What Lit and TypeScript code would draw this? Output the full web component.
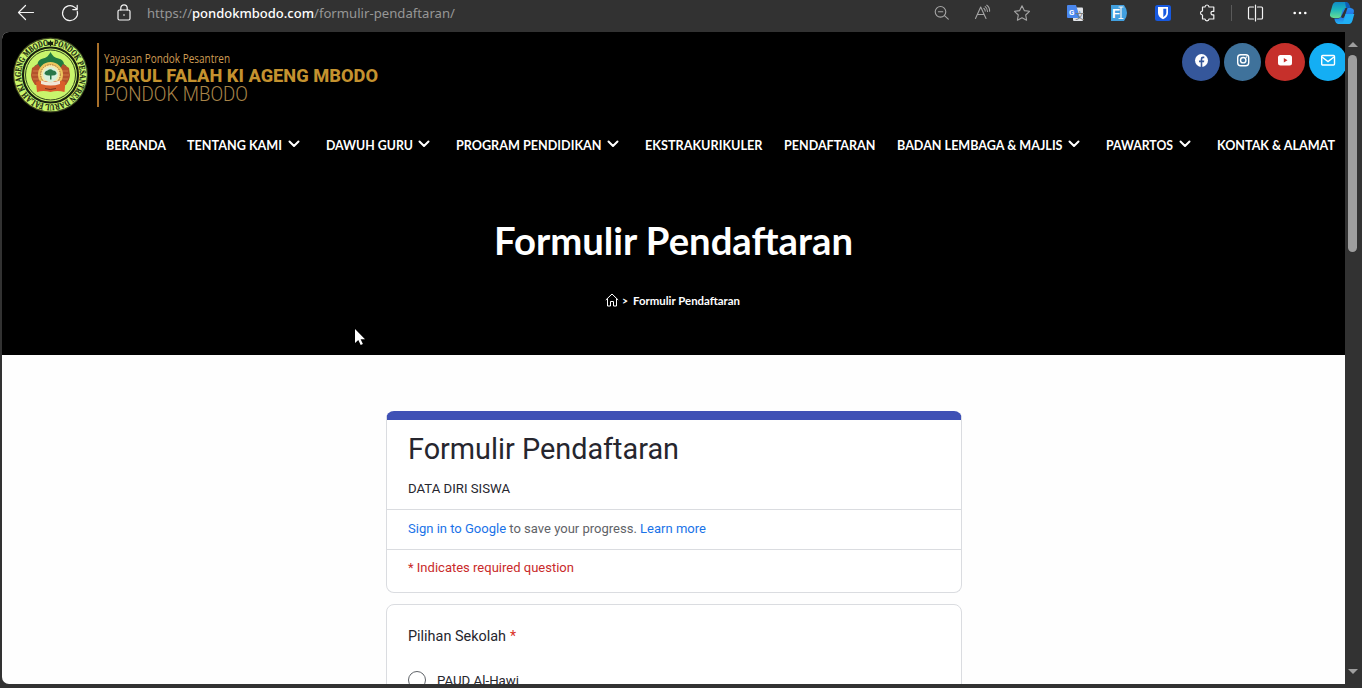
import { LitElement, html, svg, css, nothing } from "lit";
import { customElement, property } from "lit/decorators.js";

@customElement("fit-text")
class FitText extends LitElement {
  @property({ type: Number }) w = 100;
  @property({ type: Number }) h = 20;
  @property({ type: Number }) base = 15;
  @property() text = "";
  static styles = css`
    :host { display: block; flex: none; }
    svg { display: block; overflow: visible; fill: currentColor; }
  `;
  render() {
    return html`<svg width=${this.w} height=${this.h}>
      <text x="0" y=${this.base} textLength=${this.w} lengthAdjust="spacingAndGlyphs">${this.text}</text>
    </svg>`;
  }
}

@customElement("browser-bar")
class BrowserBar extends LitElement {
  static styles = css`
    :host { display: flex; height: 32px; background: #323232; flex: none; }
    svg { display: block; flex: none; fill: none; stroke: #f4f4f4; stroke-width: 1.2; stroke-linecap: round; stroke-linejoin: round; }
    .left { display: flex; align-items: center; height: 26px; padding-left: 16px; gap: 24px; flex: 1; }
    .left svg { width: 20px; height: 20px; }
    .left .lock { margin-left: 10px; }
    .url { display: flex; margin-left: -11px; font: 13.3px "Noto Sans", sans-serif; color: #979797; }
    .host { color: #fff; font-weight: 500; }
    .right { display: flex; align-items: center; height: 26px; }
    .right .dim { stroke: #a5a5a5; stroke-width: 1.1; }
    .sep { width: 1px; height: 16px; background: #5a5a5a; margin: 0 15px; }
    .g { font: bold 8px Roboto, sans-serif; fill: #fff; stroke: none; }
    .f { font: bold 13px "Liberation Sans", sans-serif; fill: #fff; stroke: none; }
    .zh { font: 9px "Noto Sans CJK SC", sans-serif; fill: #777; stroke: none; }
  `;
  render() {
    return html`
      <div class="left">
        <svg viewBox="0 0 20 20"><path d="M17.500 9.500H2.500M9.500 2.500L2.500 9.500l7 7" /></svg>
        <svg viewBox="0 0 20 20"><path d="M17.3 8.3A7.5 7.5 0 1 1 14.8 4.4L17 6.3M17.2 2.4v4.2h-4.4" /></svg>
        <svg class="lock" viewBox="0 0 20 20"><rect x="4" y="7" width="12" height="10" rx="1.5" /><path d="M6.8 7V5a3.2 3.2 0 0 1 6.4 0v2" /><circle cx="10" cy="12" r=".8" fill="#fff" stroke="none" /></svg>
        <div class="url">
          <fit-text w="45" h="20" base="15" text="https://"></fit-text>
          <fit-text class="host" w="122" h="20" base="15" text="pondokmbodo.com"></fit-text>
          <fit-text w="141" h="20" base="15" text="/formulir-pendaftaran/"></fit-text>
        </div>
      </div>
      <div class="right">
        <svg class="dim" width="18" height="20" viewBox="933 3 18 20"><circle cx="940.5" cy="11.8" r="5.3" /><path d="M938.4 11.8h4.4M944.5 15.6l3.8 3.6" /></svg>
        <svg class="dim" width="40" height="20" viewBox="951 3 40 20"><path d="M975.5 18.5L980.7 7L986 18.5M977.4 14.5h6.7M983.8 8.3q1.4 1 1.4 2.8M985.2 6.6q2.3 1.6 2.3 4.8M986.8 5.2q3 2 2.8 6" /></svg>
        <svg class="dim" width="76" height="20" viewBox="991 3 76 20"><path d="M1022 5.8l2.3 4.8 5.2.7-3.8 3.7.9 5.2-4.6-2.5-4.6 2.5.9-5.2-3.8-3.7 5.2-.7z" /></svg>
        <svg width="44" height="20" viewBox="1067 3 44 20">
          <rect x="1073" y="7.5" width="10" height="13.5" rx="1" fill="#e1e3e8" stroke="none" />
          <path d="M1068 5h8l4 13h-12a1 1 0 0 1-1-1V6a1 1 0 0 1 1-1z" fill="#4a87ee" stroke="none" />
          <text class="g" x="1069" y="14.5">G</text><text class="zh" x="1075.3" y="19">文</text>
        </svg>
        <svg width="44" height="20" viewBox="1111 3 44 20">
          <path d="M1111 5h13q3 4 3 8t-3 8h-13z" fill="#42a0df" stroke="none" />
          <text class="f" x="1112" y="17.8">F</text><path d="M1119 7h4M1121 7v11.5M1119 18.5h4" />
        </svg>
        <svg width="44" height="20" viewBox="1155 3 44 20">
          <rect x="1155" y="5" width="16" height="16" rx="2.5" fill="#1759e0" stroke="none" />
          <path d="M1158 7h10v6q0 3.8-5 6.2q-5-2.4-5-6.2z" fill="#fff" stroke="none" />
          <path d="M1163.3 8.8h3V13q0 2.4-3 4.2z" fill="#1759e0" stroke="none" />
        </svg>
        <svg width="17" height="20" viewBox="1199 3 17 20"><path d="M1202.5 7h2.5q.2-2 2-2t2 2h4.8v4.4q-2.800-.5-2.800 1.700t2.800 1.700V19h-4.800q-.2 1.800-2 1.800t-2-1.800h-2.500v-4q-2-.2-2-2t2-2z" /></svg>
        <div class="sep"></div>
        <svg width="20" height="20" viewBox="1247 3 20 20"><path d="M1253.5 7h-4q-1 0-1 1v10q0 1 1 1h4M1257.5 7h4q1 0 1 1v10q0 1-1 1h-4M1255.500 5v16" /></svg>
        <svg width="63" height="20" viewBox="1267 3 63 20"><g fill="#fff" stroke="none"><circle cx="1294.7" cy="13" r="1.3" /><circle cx="1300" cy="13" r="1.3" /><circle cx="1305.3" cy="13" r="1.3" /></g></svg>
        <svg width="32" height="26" viewBox="1330 0 32 26">
          <defs>
            <linearGradient id="c1" x1="0" y1="0" x2="0" y2="1"><stop offset="0" stop-color="#118bc7" /><stop offset=".45" stop-color="#1ab4bf" /><stop offset="1" stop-color="#68de92" /></linearGradient>
            <linearGradient id="c2" x1="0" y1="0" x2="0" y2="1"><stop offset="0" stop-color="#258df5" /><stop offset=".5" stop-color="#246fdf" /><stop offset="1" stop-color="#22b4f6" /></linearGradient>
          </defs>
          <path d="M1336 2h10q2 0 3 3l1 3h-4q-2 0-2.700 2.500l-1.400 5q-.8 2.500-3.500 2.500h-5q-4-.4-3.400-4l2.400-8.500q1-3.500 3.600-3.500z" fill="url(#c1)" stroke="none" />
          <path d="M1345 2q3.500 0 4.500 3l1 3h-4.500z" fill="#0d5db9" stroke="none" />
          <path d="M1348 24h-10q-2 0-3-3l-.7-2.500h4q2 0 2.700-2.500l1.500-5.500q.8-2.500 3.500-2.500h4.500q4 .4 3.400 4l-2.400 8.500q-1 3.500-3.500 3.500z" fill="url(#c2)" stroke="none" />
          <path d="M1344 11l1.500-3h2l-2 6-1.500 3.500q-1.500 1-3-.5z" fill="#323232" stroke="none" />
          <path d="M1345.500 14l-2 7q-1 3-4.500 3h9.500q3 0 4-3.500l1.800-6.500z" fill="#20aff5" stroke="none" />
        </svg>
      </div>`;
  }
}

@customElement("site-logo")
class SiteLogo extends LitElement {
  static styles = css`
    :host { display: flex; height: 84px; }
    svg { display: block; }
    .ring { font: bold 9px "Liberation Serif", serif; fill: #18260f; stroke: #18260f; stroke-width: .2; }
    .words { border-left: 2px solid #a8702a; margin: 11px 0 9px 6px; padding-left: 5px; display: flex; flex-direction: column; }
    .y { font: 12px "Open Sans", sans-serif; color: #cf9d54; margin-top: 8px; }
    .d { font: 800 18px Roboto, sans-serif; color: #c4922f; }
    .p { font: 300 19.5px Roboto, sans-serif; color: #a98549; }
  `;
  render() {
    return html`
      <svg width="89" height="84" viewBox="2 32 89 84">
        <circle cx="50.500" cy="75" r="37.500" fill="#39421f" />
        <circle cx="50.500" cy="75" r="36.300" fill="#c9f56c" />
        <circle cx="50.500" cy="75" r="27.500" fill="#c9f56c" stroke="#17200e" stroke-width="2.200" />
        <circle cx="50.500" cy="75" r="25" fill="none" stroke="#31461c" stroke-width="1" />
        <path id="ring" d="M50.500 45.500a29.500 29.500 0 0 1 0 59a29.500 29.500 0 0 1 0-59" fill="none" />
        <text class="ring"><textPath href="#ring" startOffset="3" textLength="180" lengthAdjust="spacingAndGlyphs">PONDOK PESANTREN DARUL FALAH KI AGENG MBODO</textPath></text>
        <path d="M50.500 40l1 2 2-.5-.6 2 .6 2-2-.5-1 1.500-1-1.500-2 .5.600-2-.6-2 2 .5z" fill="#17200e" />
        <path d="M50.500 52q2.500 5.500 8 6.500q5 1 5.500 5.500l2.500 2q-2 5-5 5h-22q-4-.5-5-5l3-2q.500-4.500 5.500-5.500q5-1 7.500-6.500z" fill="#217a42" />
        <path d="M32 68l6-4 4 6v15h-7q-4-6-4-10zM69 68l-6-4-4 6v15h7q4-6 4-10z" fill="#b4522c" />
        <path d="M33 71h6M32 75h7M33 79h6M62 71h6M62 75h7M62 79h6" stroke="#d8854a" stroke-width=".8" />
        <circle cx="50.500" cy="74.500" r="12.500" fill="#edc65e" />
        <circle cx="50.500" cy="74.500" r="9.800" fill="#f7e9a6" stroke="#a35e32" stroke-width=".9" stroke-dasharray="1.500 1" />
        <circle cx="50.500" cy="74.500" r="7.500" fill="#d6efdc" />
        <path d="M44.500 74q0-3 3-3.500q3-2.500 5.500 0q3.500 0 3.500 3.500q-2 2-5 1.500v4h-1.500v-4q-3 .5-5.500-1.500z" fill="#287749" />
        <path d="M36 82q7-3 14.500 1q7.500-4 15-1l-1 10q-7-2-14 0q-7-2-13.500 0z" fill="#d95e2b" />
        <path d="M41 80.500q9 3.500 19 0v3.500q-9 3-19 0z" fill="#f1e6d5" />
        <path d="M45 88.500q5 2 11 0" stroke="#76311c" fill="none" />
      </svg>
      <div class="words">
        <fit-text class="y" w="126" h="13" base="12" text="Yayasan Pondok Pesantren"></fit-text>
        <fit-text class="d" w="274" h="19" base="17.500" text="DARUL FALAH KI AGENG MBODO"></fit-text>
        <fit-text class="p" w="144" h="20" base="18" text="PONDOK MBODO"></fit-text>
      </div>`;
  }
}

type Item = [string, number, boolean];
const ITEMS: Item[] = [
  ["BERANDA", 60, false],
  ["TENTANG KAMI", 95, true],
  ["DAWUH GURU", 87, true],
  ["PROGRAM PENDIDIKAN", 145.500, true],
  ["EKSTRAKURIKULER", 117.5, false],
  ["PENDAFTARAN", 91.5, false],
  ["BADAN LEMBAGA & MAJLIS", 165.5, true],
  ["PAWARTOS", 67, true],
  ["KONTAK & ALAMAT", 118, false],
];

@customElement("site-header")
class SiteHeader extends LitElement {
  static styles = css`
    :host { display: flex; flex-direction: column; height: 323px; background: #000; color: #fff; flex: none; font-family: Lato, sans-serif; font-weight: 700; }
    .top { display: flex; justify-content: space-between; height: 84px; overflow: hidden; }
    .social { display: flex; gap: 4px; padding-top: 11px; margin-right: -2px; }
    .social div { height: 38px; border-radius: 50%; display: flex; justify-content: center; padding-top: 9px; box-sizing: border-box; }
    .social svg { width: 16px; height: 16px; }
    .fb { width: 38px; background: #35579b; }
    .ig { width: 37px; background: #3f729b; }
    .yt { width: 40px; background: #c6302b; }
    .ml { width: 38px; background: #14aef4; }
    nav { display: flex; padding: 19px 0 0 104px; height: 20px; font-size: 13.8px; }
    .item { display: flex; margin-right: 21.4px; }
    .item.drop { margin-right: 26px; }
    .item svg { width: 12px; height: 8px; margin: 5px 0 0 5.500px; fill: none; stroke: #fff; stroke-width: 2; stroke-linecap: round; stroke-linejoin: round; }
    .title { font-size: 38px; align-self: center; margin-top: 65px; }
    .crumb { display: flex; align-items: center; align-self: center; font-size: 12px; margin-top: 28px; margin-right: 2px; }
    .crumb svg { width: 14px; height: 14px; fill: none; stroke: #fff; }
    .gt { margin: 0 5px 0 3px; }
  `;
  render() {
    return html`
      <div class="top">
        <site-logo></site-logo>
        <div class="social">
          <div class="fb"><svg viewBox="0 0 16 16"><circle cx="8.500" cy="8.500" r="6.500" fill="#fff" /><path d="M7.700 15.500v-5.200H6V8.500h1.700V7q0-2.400 2.300-2.400h1.300v1.600h-1q-1 0-1 .9v1.400h2l-.3 1.800H9.300v5.200z" fill="#35579b" /></svg></div>
          <div class="ig"><svg viewBox="0 0 16 16" fill="none" stroke="#fff"><rect x="2.700" y="2.700" width="11" height="11" rx="3" stroke-width="1.400" /><circle cx="8.200" cy="8.200" r="2.700" stroke-width="1.400" /><circle cx="11.300" cy="5.100" r=".4" /></svg></div>
          <div class="yt"><svg viewBox="0 0 16 16"><rect x="1" y="3" width="14" height="10.500" rx="2.500" fill="#fff" /><path d="M6.800 6l3.700 2.200-3.700 2.200z" fill="#c6302b" /></svg></div>
          <div class="ml"><svg viewBox="0 0 16 16" fill="none" stroke="#fff" stroke-width="1.400"><rect x="1.700" y="3.500" width="12.800" height="9.500" rx="1" /><path d="M2 5l6 4.500L14 5" /></svg></div>
        </div>
      </div>
      <nav>
        ${ITEMS.map(([t, w, d]) => html`<div class="item ${d ? "drop" : ""}">
          <fit-text .w=${w} h="18" base="15" text=${t}></fit-text>
          ${d ? html`<svg viewBox="0 0 12 8"><path d="M1.500 1.500L6 6l4.500-4.500" /></svg>` : nothing}
        </div>`)}
      </nav>
      <fit-text class="title" w="359" h="44" base="35" text="Formulir Pendaftaran"></fit-text>
      <div class="crumb">
        <svg viewBox="0 0 14 14"><path d="M.8 7L7 1l6.200 6M2.500 5.500v7.500H5.500V8.500h3V13h3V5.500" /></svg>
        <fit-text class="gt" w="6" h="16" base="13" text=">"></fit-text>
        <fit-text w="107" h="16" base="13" text="Formulir Pendaftaran"></fit-text>
      </div>`;
  }
}

@customElement("form-body")
class FormBody extends LitElement {
  static styles = css`
    :host { display: flex; flex-direction: column; align-items: center; padding-top: 56px; gap: 11px; font: 13px/20px Roboto, sans-serif; color: #26262e; }
    .card { width: 576px; margin-left: 1px; box-sizing: border-box; border: 1px solid #dadce0; border-radius: 8px; flex: none; background: #fff; }
    .first { border-top: 9px solid #3f51b5; height: 182px; overflow: hidden; }
    .row { padding-left: 21px; box-sizing: border-box; border-bottom: 1px solid #dadce0; height: 40px; padding-top: 8px; color: #5f6368; }
    .head { height: 90px; padding-top: 9px; color: #26262e; }
    .h { font-size: 29px; line-height: 40px; }
    .sub { margin-top: 9px; }
    .last { border: 0; height: 42px; padding-top: 7px; color: #c92a2a; }
    .q { padding: 21px; height: 160px; }
    .label { display: flex; gap: 4px; font-size: 14.200px; }
    .star { color: #d93025; }
    .opt { display: flex; gap: 11px; margin-top: 24px; align-items: center; }
    .radio { width: 18px; height: 18px; box-sizing: border-box; border: 1.500px solid #5f6368; border-radius: 50%; }
  `;
  render() {
    return html`
      <div class="card first">
        <div class="row head">
          <fit-text class="h" w="271" h="40" base="30" text="Formulir Pendaftaran"></fit-text>
          <fit-text class="sub" w="102" h="20" base="14.500" text="DATA DIRI SISWA"></fit-text>
        </div>
        <div class="row"><fit-text w="298" h="20" base="14.500" .text=${svg`<tspan fill="#1a73e8">Sign in to Google</tspan> to save your progress. <tspan fill="#1a73e8">Learn more</tspan>` as any}></fit-text></div>
        <div class="row last"><fit-text w="166" h="20" base="14.500" text="* Indicates required question"></fit-text></div>
      </div>
      <div class="card q">
        <div class="label"><fit-text w="98" h="20" base="15" text="Pilihan Sekolah"></fit-text><span class="star">*</span></div>
        <div class="opt"><span class="radio"></span><fit-text w="82" h="20" base="14.500" text="PAUD Al-Hawi"></fit-text></div>
      </div>`;
  }
}

@customElement("app-root")
class AppRoot extends LitElement {
  static styles = css`
    :host { display: flex; flex-direction: column; height: 688px; background: #323232; overflow: hidden; position: relative; }
    .main { display: flex; height: 652px; padding-left: 2px; }
    .page { width: 1343px; height: 652px; overflow: hidden; background: #fefefe; border-radius: 7px 0 0 7px; flex: none; }
    .scroll { width: 17px; display: flex; flex-direction: column; align-items: center; }
    .up, .down { border: 5px solid transparent; }
    .up { border-top: 0; border-bottom: 5px solid #9e9e9e; margin: 10px 2px 0 0; }
    .thumb { width: 9px; height: 197px; border-radius: 5px; background: #9e9e9e; margin: 8px 2px 0 0; }
    .down { border-bottom: 0; border-top: 5px solid #9e9e9e; margin: auto 2px 10px 0; }
    .cursor { position: absolute; left: 354px; top: 328px; }
  `;
  render() {
    return html`
      <browser-bar></browser-bar>
      <div class="main">
        <div class="page"><site-header></site-header><form-body></form-body></div>
        <div class="scroll"><div class="up"></div><div class="thumb"></div><div class="down"></div></div>
      </div>
      <svg class="cursor" width="12" height="18" viewBox="0 0 12 18"><path d="M1 1v14l3.300-3 2.400 5 2.200-1-2.300-4.800H11z" fill="#fff" /></svg>`;
  }
}
